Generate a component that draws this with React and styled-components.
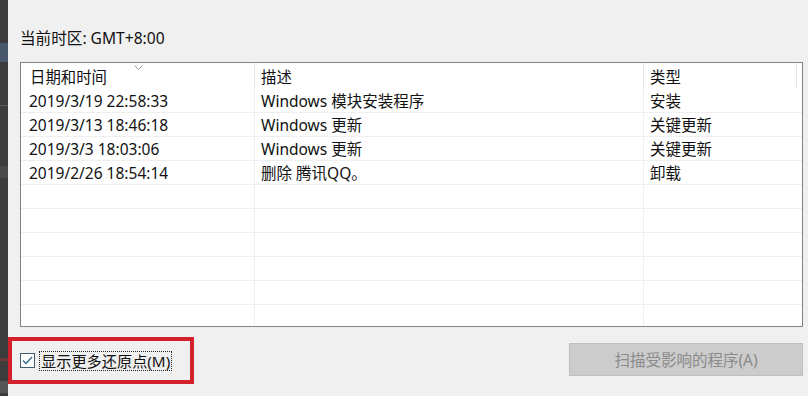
import React from "react";
import styled, { createGlobalStyle } from "styled-components";

const GlobalStyle = createGlobalStyle`
  html, body {
    margin: 0;
    padding: 0;
    background: #f0f0f0;
  }
  body {
    font-family: "Noto Sans", "Noto Sans CJK SC", sans-serif;
    color: #111;
  }
`;

const Page = styled.div`
  display: flex;
  width: 808px;
  height: 396px;
  overflow: hidden;
  background: #f0f0f0;
`;

const Backdrop = styled.div`
  width: 8px;
  flex: none;
  background: #3c3c3c;
  display: flex;
  flex-direction: column;
  padding-top: 43px;
`;

const BackdropBlock = styled.div`
  height: ${(p) => p.h}px;
  margin-bottom: ${(p) => p.gap || 0}px;
  background: ${(p) => p.color};
`;

const Dialog = styled.div`
  flex: 1;
  display: flex;
  flex-direction: column;
  padding: 29px 5px 0 12px;
`;

const Zone = styled.div`
  font-size: 15.6px;
  line-height: 18px;
  height: 18px;
  color: #111;
`;

const ListView = styled.div`
  margin-top: 15px;
  width: 783px;
  height: 265px;
  box-sizing: border-box;
  border: 1px solid #838383;
  background: #fff;
  overflow: hidden;
`;

const cols = "234px 389px 153px 1fr";

const HeaderRow = styled.div`
  display: grid;
  grid-template-columns: ${cols};
  height: 26px;
`;

const HeaderCell = styled.div`
  position: relative;
  display: flex;
  align-items: center;
  padding-left: ${(p) => p.pad}px;
  font-size: 15.4px;
  border-right: ${(p) => (p.last ? "none" : "1px solid #e5e5e5")};
`;

const SortArrow = styled.svg`
  position: absolute;
  top: 2px;
  left: 50%;
  margin-left: -4px;
`;

const Row = styled.div`
  display: grid;
  grid-template-columns: ${cols};
  height: 24px;
  box-sizing: border-box;
  border-bottom: 1px solid #efefef;
`;

const Cell = styled.div`
  display: flex;
  align-items: center;
  padding-left: ${(p) => p.pad}px;
  font-size: 15.5px;
  white-space: nowrap;
  border-right: ${(p) => (p.divider ? "1px solid #efefef" : "none")};
`;

const Footer = styled.div`
  display: flex;
  align-items: flex-start;
  justify-content: space-between;
  margin-top: 10px;
  margin-left: -12px;
`;

const Highlight = styled.div`
  width: 186px;
  height: 47px;
  box-sizing: border-box;
  border: 4px solid #d4202a;
  display: flex;
  align-items: center;
  padding-left: 8px;
  gap: 4px;
`;

const CheckBox = styled.span`
  width: 15px;
  height: 15px;
  box-sizing: border-box;
  border: 1px solid #3f5d6b;
  background: #fff;
  display: flex;
  align-items: center;
  justify-content: center;
`;

const CheckLabel = styled.span`
  font-size: 15.2px;
  line-height: 18px;
  padding: 0 1px;
  border: 1px dotted #222;
  color: #111;
`;

const ScanButton = styled.div`
  width: 234px;
  height: 33px;
  box-sizing: border-box;
  background: #cccccc;
  border: 1px solid #bfbfbf;
  color: #8a8a8a;
  font-size: 15.5px;
  display: flex;
  align-items: center;
  justify-content: center;
  margin-top: 6px;
`;

const points = [
  ["2019/3/19 22:58:33", "Windows 模块安装程序", "安装"],
  ["2019/3/13 18:46:18", "Windows 更新", "关键更新"],
  ["2019/3/3 18:03:06", "Windows 更新", "关键更新"],
  ["2019/2/26 18:54:14", "删除 腾讯QQ。", "卸载"],
];

export default function App() {
  const rows = [...points];
  while (rows.length < 10) rows.push(["", "", ""]);

  return (
    <>
      <GlobalStyle />
      <Page>
        <Backdrop>
          <BackdropBlock h={19} color="#48576a" gap={43} />
          <BackdropBlock h={1} color="#5a5a5a" gap={60} />
          <BackdropBlock h={12} color="#4a4a4a" gap={180} />
          <BackdropBlock h={3} color="#6a3a3a" gap={20} />
          <BackdropBlock h={12} color="#555" />
        </Backdrop>
        <Dialog>
          <Zone>当前时区: GMT+8:00</Zone>
          <ListView>
            <HeaderRow>
              <HeaderCell pad={9}>
                日期和时间
                <SortArrow width="9" height="5" viewBox="0 0 9 5">
                  <path d="M0.5 0.5 L4.5 4.5 L8.5 0.5" fill="none" stroke="#9a9a9a" strokeWidth="1" />
                </SortArrow>
              </HeaderCell>
              <HeaderCell pad={6}>描述</HeaderCell>
              <HeaderCell pad={6}>类型</HeaderCell>
              <HeaderCell last pad={0} />
            </HeaderRow>
            {rows.map((r, i) => (
              <Row key={i}>
                <Cell pad={8} divider>{r[0]}</Cell>
                <Cell pad={6} divider>{r[1]}</Cell>
                <Cell pad={6}>{r[2]}</Cell>
                <Cell pad={0} />
              </Row>
            ))}
          </ListView>
          <Footer>
            <Highlight>
              <CheckBox>
                <svg width="11" height="9" viewBox="0 0 11 9">
                  <path d="M1 4.5 L4 7.5 L10 1" fill="none" stroke="#2f6d86" strokeWidth="1.3" />
                </svg>
              </CheckBox>
              <CheckLabel>显示更多还原点(M)</CheckLabel>
            </Highlight>
            <ScanButton>扫描受影响的程序(A)</ScanButton>
          </Footer>
        </Dialog>
      </Page>
    </>
  );
}
